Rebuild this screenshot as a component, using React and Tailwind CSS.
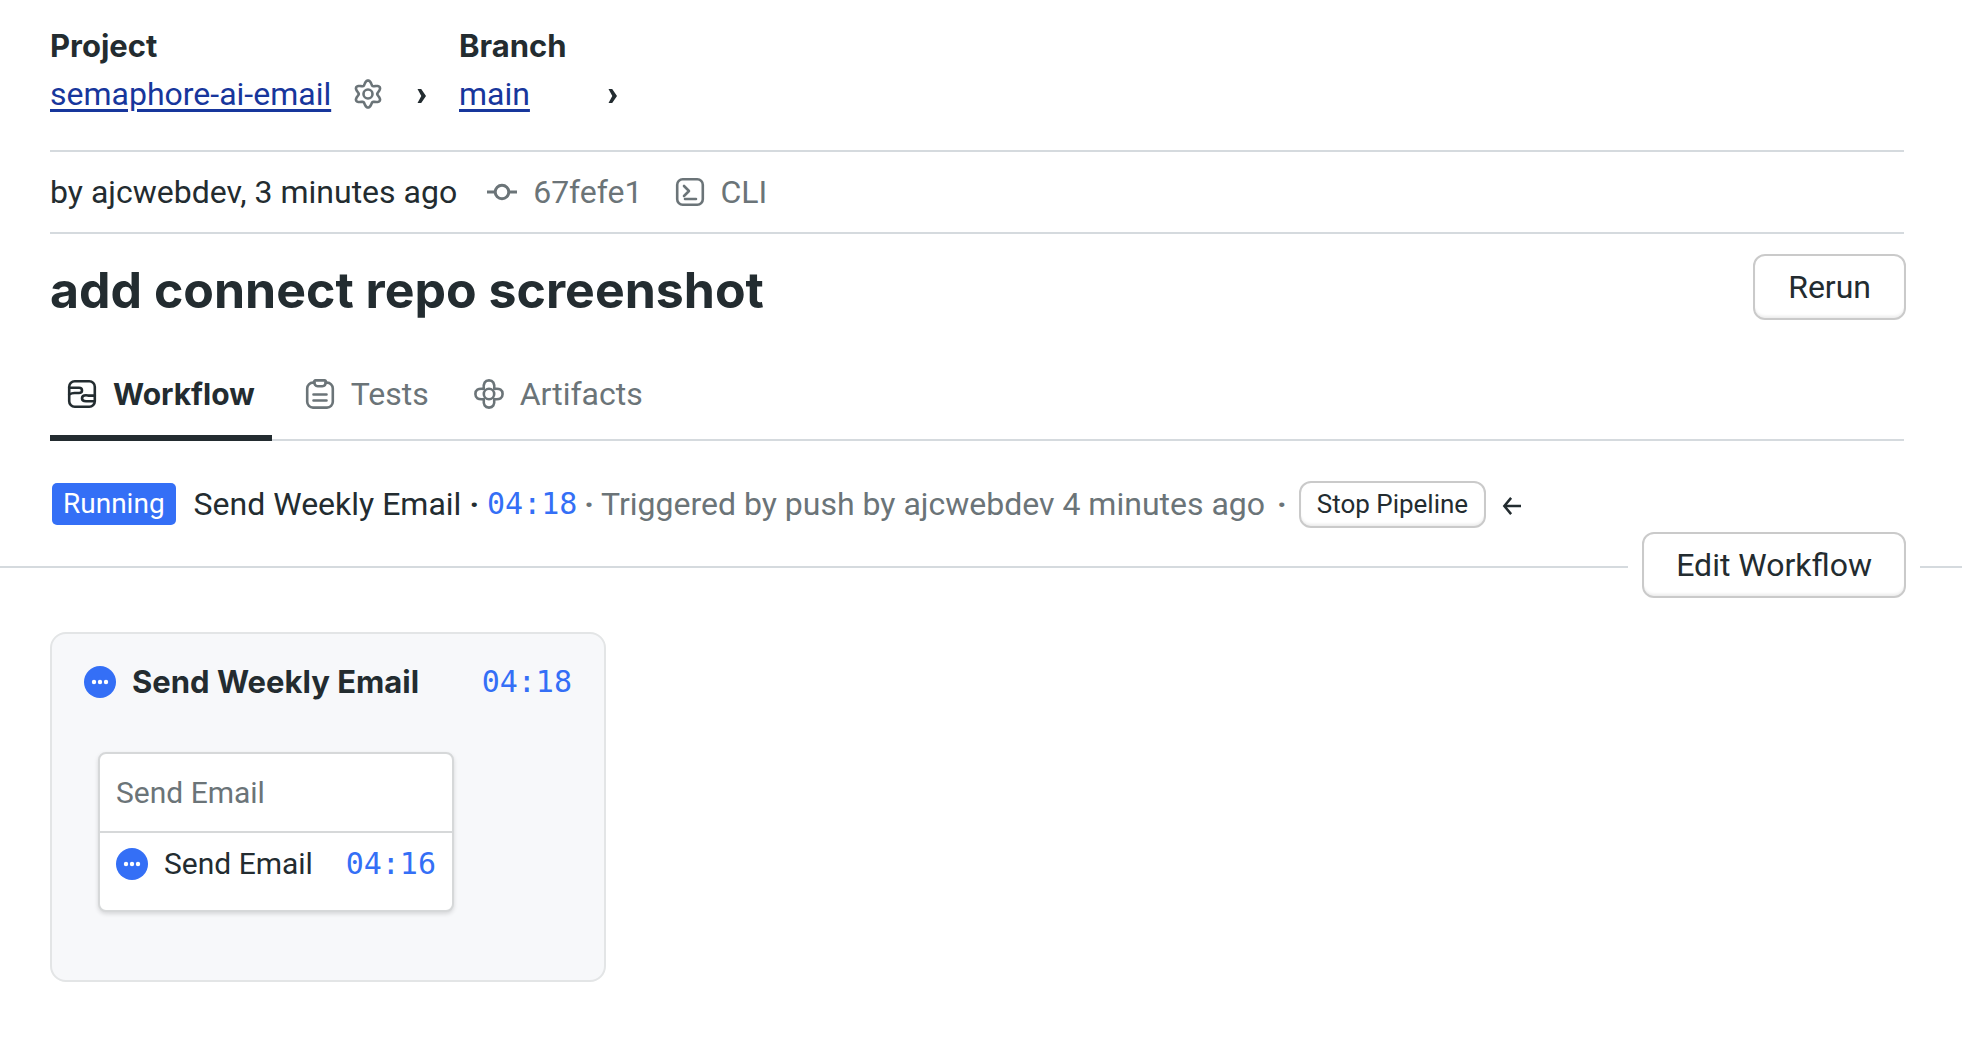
const GEAR = Array.from({ length: 72 }, (_, i) => {
  const a = (i / 72) * Math.PI * 2;
  const r = 11.4 + 2.2 * Math.cos(6 * a);
  return `${i ? "L" : "M"}${(15 + r * Math.sin(a)).toFixed(2)} ${(15 - r * Math.cos(a)).toFixed(2)}`;
}).join("") + "Z";

function Icon({ children, className = "" }) {
  return (
    <svg
      viewBox="0 0 30 30"
      className={`size-[30px] shrink-0 ${className}`}
      fill="none"
      stroke="currentColor"
      strokeWidth="2.6"
      strokeLinecap="round"
      strokeLinejoin="round"
      aria-hidden="true"
    >
      {children}
    </svg>
  );
}

function WorkflowIcon() {
  return (
    <Icon>
      <rect x="2.2" y="2.2" width="25.6" height="25.6" rx="5.5" />
      <path d="M2.2 8.8H12C14.2 8.8 15 10.2 15 11.5S14.2 14 12 14H7.5C5 14 3.8 14.5 2.2 15.5" />
      <path d="M27.8 16.6H22.5C20.8 16.6 20.8 16.2 19 16.2C16.5 16.2 15 17.4 15 19.2S16.5 22.2 19 22.2H27" />
    </Icon>
  );
}

function ClipboardIcon() {
  return (
    <Icon>
      <path d="M9.5 3.6H8A5.8 5.8 0 0 0 2.2 9.4V22.8A5.8 5.8 0 0 0 8 28.6H22A5.8 5.8 0 0 0 27.8 22.8V9.4A5.8 5.8 0 0 0 22 3.6H20.5" />
      <path d="M10.5 1.4H19.5C20.4 1.4 20.8 2 20.8 2.8C20.8 5.5 19.5 7.2 17.3 7.2H12.7C10.5 7.2 9.2 5.5 9.2 2.8C9.2 2 9.6 1.4 10.5 1.4Z" />
      <path d="M8.5 15.5H21.5M8.5 21.5H21.5" />
    </Icon>
  );
}

function ArtifactIcon() {
  return (
    <Icon>
      <path d="M9.8 10C9.2 4 11 1.4 15 1.4S20.8 4 20.2 10C26 9.2 28.6 11 28.6 15S26 20.8 20.2 20C20.8 26 19 28.6 15 28.6S9.2 26 9.8 20C4 20.8 1.4 19 1.4 15S4 9.2 9.8 10Z" />
      <circle cx="15" cy="15" r="5.2" />
    </Icon>
  );
}

function Chevron() {
  return (
    <svg viewBox="0 0 10 14" className="h-[14px] w-[10px] shrink-0" fill="currentColor" aria-hidden="true">
      <path d="M0.5 0H4.2L9 7L4.2 14H0.5L4.3 7Z" />
    </svg>
  );
}

function RunningDot() {
  return (
    <svg viewBox="0 0 32 32" className="size-8 shrink-0" role="img" aria-label="Running">
      <circle cx="16" cy="16" r="16" fill="#346ff6" />
      <g fill="#fff">
        <circle cx="10" cy="16" r="2.2" />
        <circle cx="16" cy="16" r="2.2" />
        <circle cx="22" cy="16" r="2.2" />
      </g>
    </svg>
  );
}

function Time({ children }) {
  return <span className="font-['DejaVu_Sans_Mono',monospace] text-[30px] text-[#346ff6]">{children}</span>;
}

function Button({ children, className }) {
  return (
    <button
      type="button"
      className={`border-2 border-[#cacaca] bg-white shadow-[inset_0_-3px_3px_-1px_#ececec] ${className}`}
    >
      {children}
    </button>
  );
}

function Tab({ icon, children, active }) {
  return (
    <a
      href="#"
      aria-current={active ? "page" : undefined}
      className={
        active
          ? "-mb-[2px] flex h-[88px] items-center gap-4 border-b-6 border-[#232c30] px-[17px] font-['Inter',sans-serif] text-[30px] font-bold"
          : "flex h-[86px] items-center gap-4 pb-1 text-[#6b7478]"
      }
    >
      {icon}
      {children}
    </a>
  );
}

export default function App() {
  return (
    <div className="min-h-screen bg-white font-['Roboto',sans-serif] text-[32px] leading-10 text-[#232c30]">
      <div className="pr-[58px] pl-[50px]">
        <nav className="flex border-b-2 border-[#d5dade] pt-[26px] pb-[36px]">
          <div className="w-[409px]">
            <div className="font-['Inter',sans-serif] text-[31px] font-bold">Project</div>
            <div className="mt-2 flex items-center">
              <a href="#" className="text-[#17369c] underline decoration-[3px] underline-offset-4">semaphore-ai-email</a>
              <a href="#" aria-label="Project settings" className="ml-auto text-[#6b7478]">
                <Icon>
                  <path d={GEAR} />
                  <circle cx="15" cy="15" r="4.5" />
                </Icon>
              </a>
              <span className="mr-8 ml-[34px] pt-1"><Chevron /></span>
            </div>
          </div>
          <div>
            <div className="font-['Inter',sans-serif] text-[31px] font-bold">Branch</div>
            <div className="mt-2 flex items-center gap-[78px]">
              <a href="#" className="text-[#17369c] underline decoration-[3px] underline-offset-4">main</a>
              <span className="pt-1"><Chevron /></span>
            </div>
          </div>
        </nav>

        <div className="flex h-[82px] items-center border-b-2 border-[#d5dade]">
          <span className="mr-[30px]">by ajcwebdev, 3 minutes ago</span>
          <span className="mr-8 flex items-center gap-4 text-[#6b7478]">
            <Icon>
              <path d="M0 15H8M22 15H30" strokeWidth="3" strokeLinecap="butt" />
              <circle cx="15" cy="15" r="6.8" strokeWidth="3" />
            </Icon>
            67fefe1
          </span>
          <span className="flex items-center gap-4 text-[#6b7478]">
            <Icon>
              <rect x="2.2" y="2.2" width="25.6" height="25.6" rx="5.5" />
              <path d="M9 9L14 14L9 19M10 22H21" />
            </Icon>
            CLI
          </span>
        </div>

        <div className="-mr-[2px] flex items-start justify-between pt-5">
          <h1 className="pt-[6px] font-['Inter',sans-serif] text-[50px] leading-[60px] font-bold">add connect repo screenshot</h1>
          <Button className="h-[66px] rounded-xl px-[33px]">Rerun</Button>
        </div>

        <div className="mt-[33px] flex gap-[33px] border-b-2 border-[#d5dade]">
          <Tab active icon={<WorkflowIcon />}>Workflow</Tab>
          <Tab icon={<ClipboardIcon />}>Tests</Tab>
          <div className="ml-3">
            <Tab icon={<ArtifactIcon />}>Artifacts</Tab>
          </div>
        </div>

        <div className="mt-[39px] flex h-12 items-center pl-[2px] whitespace-nowrap">
          <span className="rounded-[5px] bg-[#346ff6] px-[11px] py-[1px] text-[28px] text-white">Running</span>
          <span className="ml-[18px]">Send Weekly Email</span>
          <span className="mx-2 font-bold">·</span>
          <Time>04:18</Time>
          <span className="mx-[7px] font-bold text-[#6b7478]">·</span>
          <span className="text-[#6b7478]">Triggered by push by ajcwebdev 4 minutes ago</span>
          <span className="mx-3 font-bold text-[#6b7478]">·</span>
          <Button className="h-[47px] rounded-xl px-4 text-[26px]">Stop Pipeline</Button>
          <svg viewBox="0 0 22 20" className="mt-1 ml-4 h-[18px] w-5" fill="none" stroke="currentColor" strokeWidth="2.8" aria-hidden="true">
            <path d="M21 10H3M10 1L2.5 10L10 19" />
          </svg>
        </div>
      </div>

      <div className="mt-1 flex items-center">
        <div className="mt-[3px] h-[2px] flex-1 bg-[#d5dade]" />
        <Button className="mx-[14px] h-[66px] rounded-xl px-8">Edit Workflow</Button>
        <div className="mt-[3px] h-[2px] w-[42px] bg-[#d5dade]" />
      </div>

      <main className="px-[50px] pt-[34px] pb-[70px]">
        <section className="w-[556px] rounded-2xl border-2 border-[#e3e5e6] bg-[#f7f8fa] px-8 pt-[27px] pb-[68px]">
          <div className="flex items-center">
            <RunningDot />
            <h2 className="ml-4 font-['Inter',sans-serif] text-[31px] font-bold">Send Weekly Email</h2>
            <span className="ml-auto"><Time>04:18</Time></span>
          </div>
          <div className="mt-[50px] ml-[14px] w-[356px] rounded-lg border-2 border-[#d6d8d9] bg-white text-[30px] shadow-[0_2px_4px_#00000022]">
            <div className="flex h-[79px] items-center border-b-2 border-[#d6d8d9] px-4 text-[#6b7478]">Send Email</div>
            <div className="flex h-[77px] items-center px-4 pb-4">
              <RunningDot />
              <span className="ml-4">Send Email</span>
              <span className="ml-auto"><Time>04:16</Time></span>
            </div>
          </div>
        </section>
      </main>
    </div>
  );
}
